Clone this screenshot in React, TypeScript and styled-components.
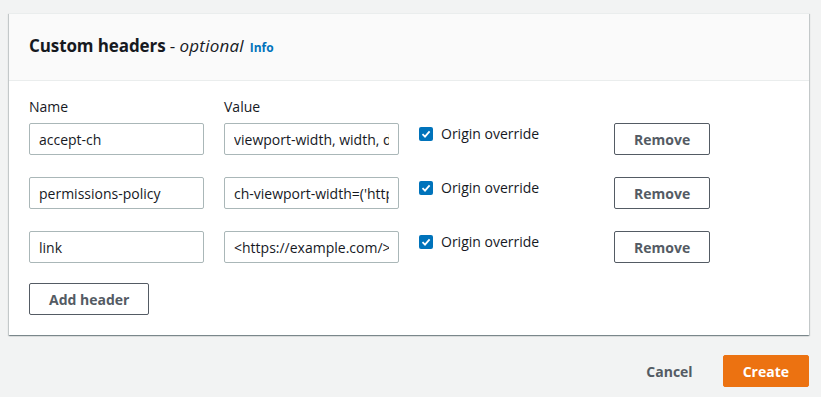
import styled, { createGlobalStyle } from "styled-components";

const GlobalStyle = createGlobalStyle`
  body {
    margin: 0;
    background: #f2f3f3;
    font-family: "Open Sans", "Liberation Sans", sans-serif;
    color: #16191f;
  }
`;

const Page = styled.div`
  padding: 13px 12px 0 9px;
  width: 821px;
  box-sizing: border-box;
`;

const Card = styled.section`
  background: #fff;
  border-top: 1px solid #eaeded;
  box-shadow: 0 1px 1px 0 rgba(0, 28, 36, 0.3), 1px 1px 1px 0 rgba(0, 28, 36, 0.15),
    -1px 1px 1px 0 rgba(0, 28, 36, 0.15);
`;

const CardHeader = styled.header`
  background: #fafafa;
  border-bottom: 1px solid #eaeded;
  padding: 18px 20px 19px 20px;
  display: flex;
  align-items: baseline;
  gap: 6px;
  line-height: 27px;
`;

const Title = styled.h2`
  margin: 0;
  font-size: 17px;
  font-weight: 700;
  letter-spacing: -0.1px;
`;

const Optional = styled.span`
  font-weight: 400;
  font-style: italic;
  letter-spacing: 0.2px;
`;

const Dash = styled.span`
  font-weight: 400;
`;

const InfoLink = styled.a`
  font-size: 12px;
  font-weight: 700;
  color: #0073bb;
  text-decoration: none;
`;

const CardBody = styled.div`
  padding: 15px 20px 20px 20px;
`;

const Grid = styled.div`
  display: grid;
  grid-template-columns: 175px 175px 175px 96px;
  column-gap: 20px;
  row-gap: 22px;
  align-items: start;
`;

const HeaderCells = styled.div`
  display: grid;
  grid-template-columns: 175px 175px;
  column-gap: 20px;
  font-size: 14px;
  line-height: 22px;
  margin-bottom: 5px;
`;

const TextInput = styled.input`
  box-sizing: border-box;
  width: 175px;
  height: 32px;
  padding: 4px 9px;
  border: 1px solid #aab7b8;
  border-radius: 2px;
  font-family: inherit;
  font-size: 14px;
  color: #16191f;
  background: #fff;
  outline: none;
`;

const CheckField = styled.label`
  display: flex;
  align-items: center;
  gap: 8px;
  font-size: 14px;
  line-height: 22px;
`;

const Box = styled.span`
  width: 14px;
  height: 14px;
  border-radius: 2px;
  background: #0073bb;
  display: flex;
  align-items: center;
  justify-content: center;
`;

const Button = styled.button<{ $primary?: boolean; $link?: boolean }>`
  box-sizing: border-box;
  height: 32px;
  padding: 0 19px;
  white-space: nowrap;
  font-family: inherit;
  font-size: 14px;
  font-weight: 700;
  border-radius: 2px;
  cursor: pointer;
  border: 1px solid ${(p) => (p.$primary ? "#ec7211" : p.$link ? "transparent" : "#545b64")};
  background: ${(p) => (p.$primary ? "#ec7211" : p.$link ? "transparent" : "#fff")};
  color: ${(p) => (p.$primary ? "#fff" : "#545b64")};
`;

const RemoveButton = styled(Button)`
  width: 96px;
`;

const AddButton = styled(Button)`
  margin-top: 20px;
  width: 120px;
`;

const Footer = styled.div`
  display: flex;
  justify-content: flex-end;
  gap: 10px;
  margin-top: 20px;
`;

const rows = [
  { name: "accept-ch", value: "viewport-width, width, device-memory, dpr" },
  { name: "permissions-policy", value: "ch-viewport-width=('https://example.com')" },
  { name: "link", value: "<https://example.com/>; rel=preconnect" },
];

function Checkbox() {
  return (
    <Box>
      <svg width="10" height="10" viewBox="0 0 10 10">
        <path d="M1.5 5.2 L4 7.6 L8.6 2.4" fill="none" stroke="#fff" strokeWidth="1.8" />
      </svg>
    </Box>
  );
}

export default function App() {
  return (
    <Page>
      <GlobalStyle />
      <Card>
        <CardHeader>
          <Title>
            Custom headers <Dash>-</Dash> <Optional>optional</Optional>
          </Title>
          <InfoLink href="#">Info</InfoLink>
        </CardHeader>
        <CardBody>
          <HeaderCells>
            <span>Name</span>
            <span>Value</span>
          </HeaderCells>
          <Grid>
            {rows.map((r) => (
              <>
                <TextInput key={r.name + "n"} readOnly defaultValue={r.name} />
                <TextInput key={r.name + "v"} readOnly defaultValue={r.value} />
                <CheckField key={r.name + "c"}>
                  <Checkbox />
                  Origin override
                </CheckField>
                <RemoveButton key={r.name + "r"}>Remove</RemoveButton>
              </>
            ))}
          </Grid>
          <AddButton>Add header</AddButton>
        </CardBody>
      </Card>
      <Footer>
        <Button $link>Cancel</Button>
        <Button $primary>Create</Button>
      </Footer>
    </Page>
  );
}
